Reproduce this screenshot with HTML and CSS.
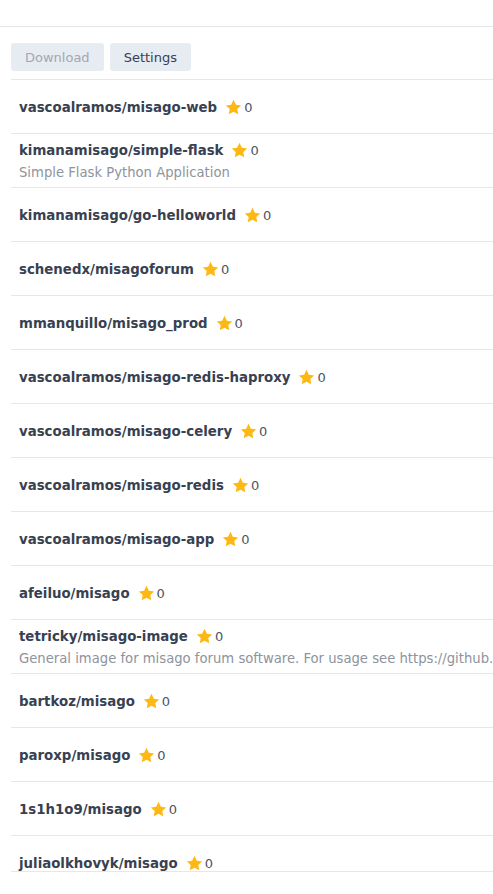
FILE: index.html
```html
<!DOCTYPE html>
<html lang="en">
<head>
  <meta charset="UTF-8" />
  <meta name="viewport" content="width=device-width, initial-scale=1.0"/>
  <title>Repositories</title>
  <link rel="stylesheet" href="styles.css">
</head>
<body>
  <div class="topbar"></div>
  <div class="toolbar">
    <button class="btn" disabled>Download</button>
    <button class="btn">Settings</button>
  </div>
  <div class="repos" id="repos"></div>

  <script>
    const repos = [
      ['vascoalramos/misago-web', ''],
      ['kimanamisago/simple-flask', 'Simple Flask Python Application'],
      ['kimanamisago/go-helloworld', ''],
      ['schenedx/misagoforum', ''],
      ['mmanquillo/misago_prod', ''],
      ['vascoalramos/misago-redis-haproxy', ''],
      ['vascoalramos/misago-celery', ''],
      ['vascoalramos/misago-redis', ''],
      ['vascoalramos/misago-app', ''],
      ['afeiluo/misago', ''],
      ['tetricky/misago-image', 'General image for misago forum software. For usage see https://github.com/tetricky/misago-image'],
      ['bartkoz/misago', ''],
      ['paroxp/misago', ''],
      ['1s1h1o9/misago', ''],
      ['juliaolkhovyk/misago', '']
    ];

    const star = '<svg class="star" viewBox="0 0 24 24"><path d="M12 1.2l3.3 6.8 7.5 1-5.5 5.2 1.4 7.4L12 18l-6.7 3.6 1.4-7.4-5.5-5.2 7.5-1z"/></svg>';
    const list = document.getElementById('repos');

    repos.forEach(function (r) {
      const row = document.createElement('div');
      row.className = 'repo';
      let html = '<div class="repo-head"><span class="name">' + r[0] + '</span>' + star + '<span class="count">0</span></div>';
      if (r[1]) {
        html += '<div class="desc">' + r[1] + '</div>';
      }
      row.innerHTML = html;
      list.appendChild(row);
    });
  </script>
</body>
</html>
```

FILE: styles.css
```css
* {
  box-sizing: border-box;
}

body {
  margin: 0;
  background: #fff;
  font-family: 'DejaVu Sans', Verdana, sans-serif;
  font-size: 13px;
  color: #374151;
  overflow: hidden;
}

.topbar {
  height: 27px;
  border-bottom: 1px solid #e5e7eb;
}

.toolbar {
  display: flex;
  gap: 6px;
  padding: 16px 11px 8px;
}

.btn {
  height: 28px;
  padding: 1px 14px 0;
  border: none;
  border-radius: 3px;
  background: #e7ebf2;
  font-family: inherit;
  font-size: 13px;
  color: #374151;
}

.btn:disabled {
  color: #a2a8b3;
}

.repos {
  margin-left: 11px;
  height: 793px;
  overflow: hidden;
  border-top: 1px solid #e5e7eb;
  border-bottom: 1px solid #e5e7eb;
}

.repo {
  height: 54px;
  padding: 2px 8px 0;
  display: flex;
  flex-direction: column;
  justify-content: center;
  border-bottom: 1px solid #e5e7eb;
  white-space: nowrap;
}

.repo-head {
  display: flex;
  align-items: center;
  line-height: 20px;
}

.name {
  font-weight: bold;
  font-size: 13.33px;
}

.star {
  width: 17px;
  height: 17px;
  margin-left: 8px;
  fill: #fdb813;
}

.count {
  margin-left: 2px;
  color: #4b5563;
}

.desc {
  color: #8e939c;
  font-size: 13.2px;
  line-height: 20px;
  margin-top: 2px;
}
```
